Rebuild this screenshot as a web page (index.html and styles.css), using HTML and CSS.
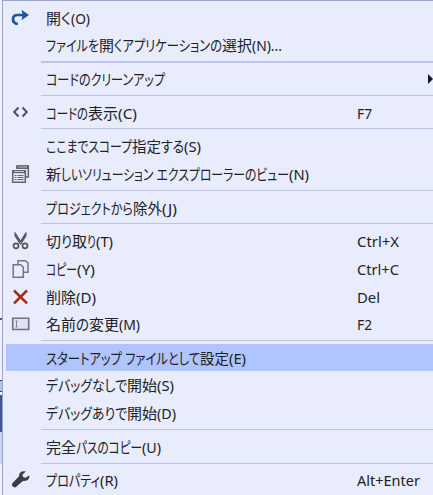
FILE: index.html
```html
<!DOCTYPE html>
<html lang="ja">
<head>
<meta charset="utf-8">
<title>コンテキスト メニュー</title>
<link rel="stylesheet" href="styles.css">
</head>
<body>
<div class="window">
<div class="backdrop"><i class="rule"></i><i class="peek"></i><i class="selected"></i><i class="tail"></i></div>
<div class="menu" role="menu">
  <div class="item"><svg class="icon" viewBox="0 0 20 20"><path d="M14 7H7.500C4.600 7 3 8.700 3 11.200S4.700 15.500 7.800 16" fill="none" stroke="#17599a" stroke-width="2.7"/><path d="M11.500 1.800L19 7l-7.500 5.300 1.200-5.300z" fill="#17599a"/></svg><span class="label"><b data-w="15">開</b><b data-w="10">く</b><b data-w="19">(O)</b></span></div>
  <div class="item"><i class="icon"></i><span class="label"><b data-w="53">ファイルを</b><b data-w="15">開</b><b data-w="108">くアプリケーションの</b><b data-w="30">選択</b><b data-w="30">(N)...</b></span></div>
  <div class="sep strong"></div>
  <div class="item"><i class="icon"></i><span class="label"><b data-w="119">コードのクリーンアップ</b></span><i class="arrow"></i></div>
  <div class="sep"></div>
  <div class="item"><svg class="icon" viewBox="0 0 20 20"><path d="M8.500 4.500L4.200 9l4.300 4.500M12.500 4.500L16.800 9l-4.300 4.500" fill="none" stroke="#505258" stroke-width="2"/></svg><span class="label"><b data-w="42">コードの</b><b data-w="30">表示</b><b data-w="19">(C)</b></span><span class="key"><b data-w="15">F7</b></span></div>
  <div class="sep"></div>
  <div class="item"><i class="icon"></i><span class="label"><b data-w="86">ここまでスコープ</b><b data-w="29">指定</b><b data-w="23">する</b><b data-w="17">(S)</b></span></div>
  <div class="item"><svg class="icon" viewBox="0 0 20 20"><path d="M7 5V2h11.300v11H16" fill="none" stroke="#62646d" stroke-width="1.500"/><path d="M6.400 1.400H19V5H6.400z" fill="#62646d"/><path d="M8 3h9" stroke="#b9bdcb"/><path d="M2.700 6.700h12.600v11.600H2.700z" fill="#e6e8f5" stroke="#62646d" stroke-width="1.500"/><path d="M2 6h14v3.200H2z" fill="#62646d"/><path d="M4 7.500h10" stroke="#c5c8d4"/><path d="M4.500 11.500h2m1 0h6m-9 2h2m1 0h6m-9 2h2m1 0h6" stroke="#666872" stroke-width="1"/></svg><span class="label"><b data-w="15">新</b><b data-w="228">しいソリューション エクスプローラーのビュー</b><b data-w="20">(N)</b></span></div>
  <div class="sep"></div>
  <div class="item"><i class="icon"></i><span class="label"><b data-w="87">プロジェクトから</b><b data-w="29">除外</b><b data-w="15">(J)</b></span></div>
  <div class="sep"></div>
  <div class="item"><svg class="icon" viewBox="0 0 20 20"><path d="M5 1.500L11.700 12l-1.400 1.200L5 5zM16 1.500L9.300 12l1.400 1.200L16 5z" fill="#55575d" stroke="#55575d"/><circle cx="6" cy="14.800" r="2.500" fill="none" stroke="#55575d" stroke-width="1.700"/><circle cx="15" cy="14.800" r="2.500" fill="none" stroke="#55575d" stroke-width="1.700"/></svg><span class="label"><b data-w="15">切</b><b data-w="11">り</b><b data-w="15">取</b><b data-w="9">り</b><b data-w="17">(T)</b></span><span class="key"><b data-w="42">Ctrl+X</b></span></div>
  <div class="item"><svg class="icon" viewBox="0 0 20 20"><path d="M8 1.700h7.500L18 4v9.300H8z" fill="#e8ecfd" stroke="#75777f" stroke-width="1.500"/><path d="M3.200 5.700h7.500L13.300 8v10.300H3.200z" fill="#e8ecfd" stroke="#75777f" stroke-width="1.500"/></svg><span class="label"><b data-w="31">コピー</b><b data-w="18">(Y)</b></span><span class="key"><b data-w="42">Ctrl+C</b></span></div>
  <div class="item"><svg class="icon" viewBox="0 0 20 20"><path d="M4 3.500l13 12.800M17 3.500L4 16.300" stroke="#ac2810" stroke-width="2.500"/></svg><span class="label"><b data-w="30">削除</b><b data-w="20">(D)</b></span><span class="key"><b data-w="23">Del</b></span></div>
  <div class="item"><svg class="icon" viewBox="0 0 20 20"><path d="M2.700 4.300h16v11.200h-16z" fill="#e1e2f2" stroke="#70717b" stroke-width="1.600"/><path d="M5.500 7h2m-2 6h2m-1-6v6" stroke="#777982" stroke-width=".9"/></svg><span class="label"><b data-w="30">名前</b><b data-w="13">の</b><b data-w="30">変更</b><b data-w="21">(M)</b></span><span class="key"><b data-w="15">F2</b></span></div>
  <div class="sep"></div>
  <div class="item active"><i class="icon"></i><span class="label"><b data-w="154">スタートアップ ファイルとして</b><b data-w="29">設定</b><b data-w="17">(E)</b></span></div>
  <div class="item"><i class="icon"></i><span class="label"><b data-w="81">デバッグなしで</b><b data-w="30">開始</b><b data-w="17">(S)</b></span></div>
  <div class="item"><i class="icon"></i><span class="label"><b data-w="81">デバッグありで</b><b data-w="30">開始</b><b data-w="19">(D)</b></span></div>
  <div class="sep"></div>
  <div class="item"><i class="icon"></i><span class="label"><b data-w="30">完全</b><b data-w="66">パスのコピー</b><b data-w="19">(U)</b></span></div>
  <div class="sep"></div>
  <div class="item"><svg class="icon" viewBox="0 0 20 20"><path d="M19.300 5.200l-3.600 2.600-2.700-.8-.5-2.600 3.400-2.900C12 .2 8.700 2.500 9 6.300L2.400 13.300c-1.500 2 1.500 5.500 3.800 3.500l6.700-5.900c3.900.8 7.200-1.800 6.400-5.700z" fill="#3c3d42"/></svg><span class="label"><b data-w="54">プロパティ</b><b data-w="18">(R)</b></span><span class="key"><b data-w="63">Alt+Enter</b></span></div>
</div>
</div>
<script src="script.js"></script>
</body>
</html>
```
FILE: styles.css
```css
* { box-sizing: border-box; }
body { margin: 0; overflow: hidden; }
.window {
  display: flex;
  width: 433px;
  height: 495px;
  background: #e8ecfd;
  color: #202126;
  font-family: "Noto Sans", "Noto Sans CJK JP", sans-serif;
  font-size: 15px;
}
.backdrop {
  display: flex;
  flex-direction: column;
  width: 2px;
  padding-top: 318px;
  background: #f0f1f6;
}
.rule { height: 2px; background: #55565e; }
.peek {
  height: 12px;
  margin: 60px 0 3px;
  border: solid #3a4560;
  border-width: 1px 0;
  background: #a8c8df;
}
.selected { height: 37px; background: #43568f; }
.tail { height: 32px; background: #cdd4ef; }
.menu {
  width: 431px;
  height: 495px;
  padding-top: 2.8px;
  border-top: 1px solid #98a4cf;
  border-left: 1px solid #98a4cf;
}
.item {
  display: flex;
  align-items: center;
  height: 27.65px;
  margin-left: 3px;
  line-height: 20px;
  white-space: nowrap;
}
.icon { width: 20px; height: 20px; margin-left: 4px; flex: none; }
.label { display: flex; width: 311px; margin-left: 15.6px; }
.key { display: flex; }
.label b, .key b { display: block; font-weight: 400; }
.fit { display: inline-block; transform-origin: 0 50%; font-feature-settings: "palt"; }
.active { background: #b0c4ff; height: 27px; margin-bottom: .65px; }
.sep { height: 6.04px; margin-left: 38px; padding-top: 2px; }
.sep::before { content: ""; display: block; height: 1px; background: #bbc5e8; }
.sep.strong::before { height: 2px; }
.arrow {
  margin-left: 71px;
  border-left: 5px solid #17181c;
  border-top: 5px solid transparent;
  border-bottom: 5px solid transparent;
}
```
FILE: script.js
```js
// Condense each text run to its column width, like a proportional UI kana face.
document.querySelectorAll('b[data-w]').forEach(function (run) {
  var width = Number(run.dataset.w);
  var inner = document.createElement('span');
  inner.className = 'fit';
  inner.textContent = run.textContent;
  run.replaceChildren(inner);
  var natural = inner.getBoundingClientRect().width;
  run.style.width = width + 'px';
  inner.style.transform = 'scaleX(' + width / natural + ')';
});
```
